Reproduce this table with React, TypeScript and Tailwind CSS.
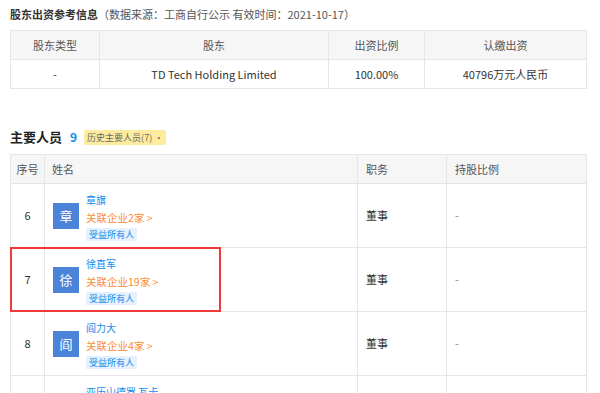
import React from "react";

const font = { fontFamily: '"Noto Sans CJK SC", "Noto Sans", sans-serif' };

const people = [
  { no: 6, surname: "章", name: "章旗", count: 2 },
  { no: 7, surname: "徐", name: "徐直军", count: 19 },
  { no: 8, surname: "阎", name: "阎力大", count: 4 },
  { no: 9, surname: "亚", name: "亚历山德罗 瓦卡", count: 3 },
];

export default function App() {
  return (
    <div className="w-[600px] h-[393px] overflow-hidden bg-white text-[#333]" style={font}>
      {/* 股东出资 */}
      <div className="px-[10px] pt-[5px]">
        <div className="text-[11px] leading-[18px] text-[#333]">
          <span className="font-bold">股东出资参考信息</span>
          <span className="text-[#555]">（数据来源：工商自行公示 有效时间：2021-10-17）</span>
        </div>
        <table className="mt-[7px] w-[577px] border-collapse text-[11px] text-center table-fixed">
          <thead>
            <tr className="bg-[#f6f6f6] text-[#555] h-[29px]">
              <th className="w-[89px] border border-[#e6e6e6] font-normal">股东类型</th>
              <th className="w-[229px] border border-[#e6e6e6] font-normal">股东</th>
              <th className="w-[96px] border border-[#e6e6e6] font-normal">出资比例</th>
              <th className="border border-[#e6e6e6] font-normal">认缴出资</th>
            </tr>
          </thead>
          <tbody>
            <tr className="h-[29px]">
              <td className="border border-[#e6e6e6]">-</td>
              <td className="border border-[#e6e6e6]">TD Tech Holding Limited</td>
              <td className="border border-[#e6e6e6]">100.00%</td>
              <td className="border border-[#e6e6e6]">40796万元人民币</td>
            </tr>
          </tbody>
        </table>
      </div>

      {/* 主要人员 */}
      <div className="px-[10px] mt-[38px]">
        <div className="flex items-center h-[20px]">
          <span className="text-[13px] font-bold text-[#222]">主要人员</span>
          <span className="ml-[8px] text-[12px] font-bold text-[#128bed]">9</span>
          <span className="ml-[7px] bg-[#fdeb9e] text-[#666] text-[9px] leading-[15px] px-[3px] rounded-[2px]">
            历史主要人员(7) ·
          </span>
        </div>

        <div className="relative mt-[7px]">
          <table className="w-[577px] border-collapse text-[11px] table-fixed">
            <thead>
              <tr className="bg-[#f6f6f6] text-[#555] h-[29px] text-left">
                <th className="w-[34px] border border-[#e6e6e6] font-normal text-center">序号</th>
                <th className="w-[313px] border border-[#e6e6e6] font-normal pl-[7px]">姓名</th>
                <th className="w-[89px] border border-[#e6e6e6] font-normal pl-[8px]">职务</th>
                <th className="border border-[#e6e6e6] font-normal pl-[8px]">持股比例</th>
              </tr>
            </thead>
            <tbody>
              {people.map((p) => (
                <tr key={p.no} className="h-[64px]">
                  <td className="border border-[#e6e6e6] text-center">{p.no}</td>
                  <td className="border border-[#e6e6e6] pl-[8px]">
                    <div className="flex items-center gap-[7px]">
                      <div className="w-[26px] h-[26px] bg-[#4a83d8] text-white text-[13px] flex items-center justify-center">
                        {p.surname}
                      </div>
                      <div className="flex flex-col">
                        <span className="text-[#128bed] text-[10px] leading-[18px]">{p.name}</span>
                        <span className="text-[#fd8b35] text-[10.5px] leading-[18px]">
                          关联企业{p.count}家 &gt;
                        </span>
                        <span className="mt-[1px] self-start bg-[#e6f1fd] text-[#128bed] text-[9px] leading-[13px] px-[3px]">
                          受益所有人
                        </span>
                      </div>
                    </div>
                  </td>
                  <td className="border border-[#e6e6e6] pl-[8px]">董事</td>
                  <td className="border border-[#e6e6e6] pl-[8px] text-[#888]">-</td>
                </tr>
              ))}
            </tbody>
          </table>
          {/* 高亮框 */}
          <div className="absolute left-0 top-[93px] w-[211px] h-[65px] border-2 border-[#f03a3a] pointer-events-none" />
        </div>
      </div>
    </div>
  );
}
